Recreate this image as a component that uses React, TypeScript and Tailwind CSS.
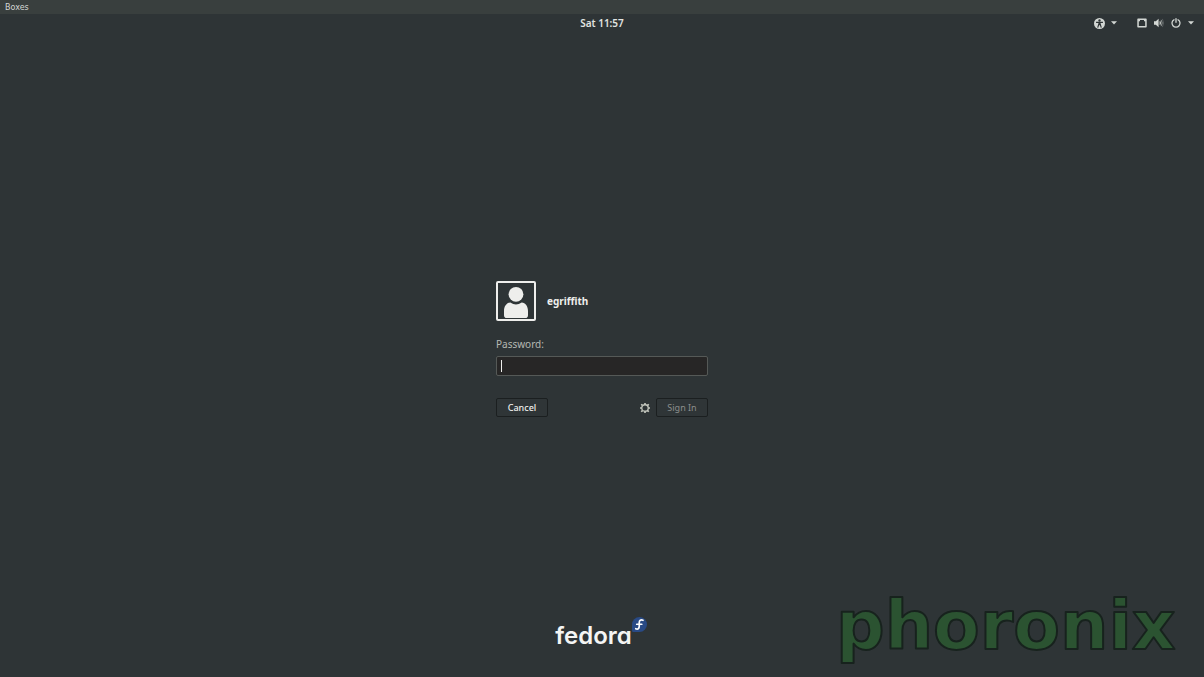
import React from "react";

function Caret() {
  return (
    <svg viewBox="0 0 6 4" className="h-[4px] w-[6px]" fill="currentColor" aria-hidden="true">
      <path d="M0 .3h6L3 3.6z" />
    </svg>
  );
}

function AccessibilityIcon() {
  return (
    <svg viewBox="0 0 16 16" className="size-[11px]" aria-hidden="true">
      <circle cx="8" cy="8" r="8" fill="#d3d7d4" />
      <circle cx="8" cy="3.6" r="1.7" fill="#2e3436" />
      <path d="M3 6.4h10M8 6v4.2M7 9l-1.6 5M9 9l1.6 5" stroke="#2e3436" strokeWidth="1.7" fill="none" />
      <path d="M6.4 6h3.2v4.5H6.4z" fill="#2e3436" />
    </svg>
  );
}

function NetworkIcon() {
  return (
    <svg viewBox="0 0 10 10" className="size-[10px]" aria-hidden="true">
      <path
        fillRule="evenodd"
        fill="currentColor"
        d="M1 .5h8q.7 0 .7.7v7.6q0 .7-.7.7H1q-.7 0-.7-.7V1.2q0-.7.7-.7zM1.800 3.200v4.900h6.400V3.200H7V2H3v1.200z"
      />
    </svg>
  );
}

function VolumeIcon() {
  return (
    <svg viewBox="0 0 10 10" className="size-[10px]" aria-hidden="true">
      <path d="M0 3.200h1.800L4.600.8v8.400L1.800 6.800H0z" fill="currentColor" />
      <path d="M5.800 3.300q1.200 1.700 0 3.400" stroke="currentColor" strokeWidth="1.200" fill="none" />
      <path d="M7.100 1.900q2.200 3.100 0 6.200" stroke="currentColor" strokeWidth="1" fill="none" opacity=".6" />
      <path d="M8.400 .9q2.400 4.100 0 8.200" stroke="currentColor" strokeWidth=".8" fill="none" opacity=".3" />
    </svg>
  );
}

function PowerIcon() {
  return (
    <svg viewBox="0 0 10 10" className="size-[10px]" fill="none" stroke="currentColor" strokeLinecap="round" aria-hidden="true">
      <path d="M3 1.700a4 4 0 1 0 4 0" strokeWidth="1.300" />
      <path d="M5 .7v3.600" strokeWidth="1.300" />
    </svg>
  );
}

function GearIcon() {
  return (
    <svg viewBox="0 0 12 12" className="size-[10px]" fill="none" stroke="currentColor" aria-hidden="true">
      <circle cx="6" cy="6" r="3.900" strokeWidth="1.600" />
      <path
        d="M6 0v2M6 10v2M0 6h2M10 6h2M1.500 1.500l1.450 1.450M9.050 9.050l1.450 1.450M10.500 1.500l-1.450 1.450M2.950 9.050l-1.450 1.450"
        strokeWidth="2"
      />
    </svg>
  );
}

function Avatar() {
  return (
    <svg viewBox="0 0 36 36" className="size-9" fill="#eeeeec" role="img" aria-label="User picture">
      <circle cx="18" cy="11.300" r="7.400" />
      <path d="M6 28c0-5 2.600-8.300 6.300-8.600Q18 23.400 23.700 19.400C27.400 19.700 30 23 30 28v4.200q0 2.800-2.800 2.800H8.800Q6 35 6 32.200z" />
    </svg>
  );
}

function FedoraMark() {
  return (
    <svg viewBox="0 0 30 30" className="size-[15px]" aria-hidden="true">
      <path d="M15 0a15 15 0 1 1 0 30H3q-3 0-3-3V15A15 15 0 0 1 15 0z" fill="#294a85" />
      <path
        d="M22 6.500c-4.500-2-7.500 0-7.500 4.500v7.500c0 5-3 6.500-7 5M9.500 14.500h10"
        fill="none"
        stroke="#fff"
        strokeWidth="3.400"
        strokeLinecap="round"
      />
    </svg>
  );
}

export default function App() {
  return (
    <div className="flex min-h-screen flex-col bg-[#2e3436] font-['Noto_Sans','Open_Sans',sans-serif] text-[#d3d7d4]">
      <header className="h-[14px] bg-[#393f3e] px-[5px] font-['DejaVu_Sans',sans-serif] text-[8px] leading-[15px]">
        Boxes
      </header>

      <nav className="grid h-[18px] grid-cols-3 items-center px-[10px]">
        <span />
        <button type="button" className="justify-self-center text-[10px] leading-[18px] font-semibold text-[#e2e4e2]">
          Sat 11:57
        </button>
        <div className="flex items-center gap-5 justify-self-end">
          <button type="button" aria-label="Accessibility" className="flex items-center gap-[6px]">
            <AccessibilityIcon />
            <Caret />
          </button>
          <button type="button" aria-label="System menu" className="flex items-center gap-[7px]">
            <NetworkIcon />
            <VolumeIcon />
            <PowerIcon />
            <Caret />
          </button>
        </div>
      </nav>

      <main className="flex grow items-center justify-center pt-[73px]">
        <form className="flex w-[212px] flex-col" onSubmit={(e) => e.preventDefault()}>
          <div className="flex items-center gap-[11px]">
            <div className="rounded-[2px] border-2 border-[#eeeeec]">
              <Avatar />
            </div>
            <h1 className="text-[10px] font-bold text-[#eeeeec]">egriffith</h1>
          </div>
          <label htmlFor="password" className="mt-4 text-[10px] leading-[14px] text-[#b5b8b3]">
            Password:
          </label>
          <div className="relative mt-[5px]">
            <input
              id="password"
              type="password"
              className="block h-5 w-full rounded-[2px] border border-[#555957] bg-[#272626] px-1 text-[10px] caret-[#eeeeec] outline-none"
            />
            <span className="absolute top-[4px] left-[5px] h-3 w-px bg-[#eeeeec]" />
          </div>
          <div className="mt-[22px] flex items-center">
            <button
              type="button"
              className="h-[19px] w-[52px] rounded-[2px] border border-[#1b1f20] bg-[#2f3537] text-[9px] leading-[17px] font-medium text-[#eeeeec]"
            >
              Cancel
            </button>
            <button type="button" aria-label="Session settings" className="mr-[6px] ml-auto text-[#c4c7be]">
              <GearIcon />
            </button>
            <button
              type="submit"
              disabled
              className="h-[19px] w-[52px] rounded-[2px] border border-[#1b1f20] bg-[#2f3537] text-[9px] leading-[17px] text-[#8b8e8c]"
            >
              Sign In
            </button>
          </div>
        </form>
      </main>

      <footer className="grid h-[84px] grid-cols-[1fr_auto_1fr] items-start pr-[18px] pl-[16px]">
        <span />
        <div className="flex items-start pt-6">
          <span className="pt-1 font-['Inter','Lato',sans-serif] text-[24px] leading-[30px] font-semibold text-[#f4f5f4] [font-feature-settings:'cv11']">
            fedora
          </span>
          <FedoraMark />
        </div>
        <svg className="h-[84px] w-[350px] justify-self-end overflow-visible" role="img" aria-label="phoronix">
          <text
            x="0"
            y="56"
            className="font-['DejaVu_Sans',sans-serif] text-[68px] font-bold"
            fill="#2b5331"
            stroke="#17221d"
            strokeWidth="2"
            strokeLinejoin="round"
          >
            phoronix
          </text>
        </svg>
      </footer>
    </div>
  );
}
